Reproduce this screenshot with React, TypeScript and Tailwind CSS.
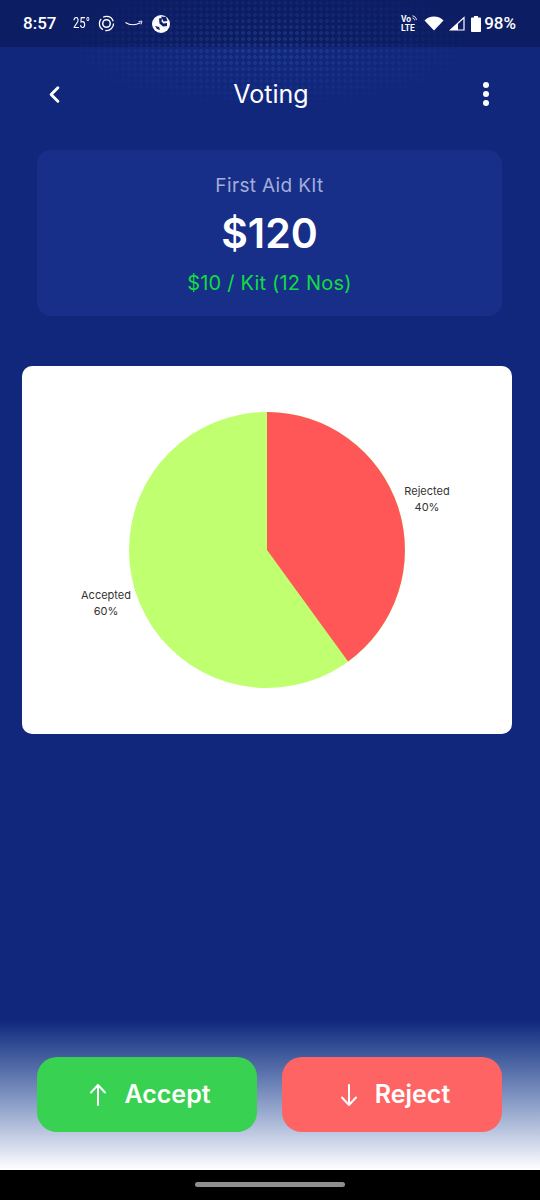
function StatusBar() {
  return (
    <div className="relative z-10 flex h-[47px] shrink-0 items-center justify-between bg-[#0c1d63] pl-[23px] pr-[24px] font-['Roboto',sans-serif] text-white">
      <div className="flex items-center">
        <span className="w-[50px] text-[17px] font-medium leading-none">8:57</span>
        <span className="w-[25px] origin-left scale-x-75 text-[15px] leading-none">25°</span>
        {/* focus ring */}
        <svg width="17" height="17" viewBox="0 0 18 18" fill="none" stroke="white">
          <circle cx="9" cy="9" r="4" strokeWidth="1.6" />
          <circle cx="9" cy="9" r="7.5" strokeWidth="1.4" strokeDasharray="13 2.7" />
        </svg>
        {/* amazon smile */}
        <svg className="ml-[10px]" width="18" height="10" viewBox="0 0 18 10" fill="none" stroke="white">
          <path d="M0.5 3.5C5 6.5 10 6.5 15.5 3.8" strokeWidth="1.1" />
          <path d="M13.5 2.5L17 2.2L16 5.4" strokeWidth="0.9" />
        </svg>
        {/* call app */}
        <svg className="ml-[9px]" width="18" height="18" viewBox="0 0 18 18">
          <circle cx="9" cy="9" r="9" fill="white" />
          <path d="M7 3.5L10 3L9.5 6.5L11.5 8.5L15 8L15 11L11 11.5L7.5 8.5Z" fill="#0c1d63" />
          <path d="M9 1.5L14 2L15.5 6L11.5 6.5Z" fill="#0c1d63" />
          <path d="M3 11L7 12L8 15L5 14Z" fill="#0c1d63" />
        </svg>
      </div>
      <div className="flex items-center">
        <div className="mr-[7px] flex flex-col text-[8.5px] font-bold leading-[9px]">
          <div className="flex items-start">
            <span>Vo</span>
            <svg className="ml-[1px]" width="5" height="8" viewBox="0 0 5 8" fill="none" stroke="white" strokeWidth="0.9">
              <path d="M0.5 0.8C2.8 1.2 4.2 2.8 4.4 5M0.5 3C1.8 3.2 2.5 4 2.7 5.4" />
            </svg>
          </div>
          <span>LTE</span>
        </div>
        <svg width="20" height="15" viewBox="0 0 20 15" fill="white">
          <path d="M0.5 4.5C3 2 6 0.5 10 0.5C14 0.5 17 2 19.5 4.5L10 14.5Z" />
        </svg>
        <svg className="ml-[5px]" width="16" height="15" viewBox="0 0 16 15" fill="none" stroke="white">
          <path d="M1.5 14L15 1.5V14Z" strokeWidth="1.2" />
          <path d="M1.5 14L9 7V14Z" fill="white" stroke="none" />
        </svg>
        <svg className="ml-[6px]" width="10" height="16" viewBox="0 0 10 16" fill="white">
          <path d="M3 0H7V1.5H9.2C9.6 1.5 10 1.9 10 2.3V15.2C10 15.6 9.6 16 9.2 16H0.8C0.4 16 0 15.6 0 15.2V2.3C0 1.9 0.4 1.5 0.8 1.5H3Z" />
        </svg>
        <span className="ml-[3px] text-[17px] font-medium leading-none">98%</span>
      </div>
    </div>
  );
}

function PieChart() {
  return (
    <svg width="490" height="368" viewBox="0 0 490 368">
      <circle cx="245" cy="184" r="138" fill="#c0ff6f" />
      <path d="M245 184V46A138 138 0 0 1 326.1 295.6Z" fill="#ff5757" />
      <g fontSize="11" fill="#333" textAnchor="middle">
        <text x="405" y="129">Rejected</text>
        <text x="405" y="145">40%</text>
        <text x="84" y="233">Accepted</text>
        <text x="84" y="249">60%</text>
      </g>
    </svg>
  );
}

function ActionArrow({ down }: { down?: boolean }) {
  return (
    <svg className={down ? 'rotate-180' : ''} width="18" height="24" viewBox="0 0 18 24" fill="none" stroke="white" strokeWidth="2" strokeLinecap="round" strokeLinejoin="round">
      <path d="M9 22V2M2 9.5L9 2L16 9.5" />
    </svg>
  );
}

export default function App() {
  return (
    <div className="relative flex h-[1200px] w-[540px] flex-col overflow-hidden bg-[#10277c] font-['Inter',sans-serif] text-white">
      {/* dot texture behind the top bars */}
      <div className="absolute left-[60px] top-0 z-20 h-[110px] w-[420px] bg-[radial-gradient(circle,rgba(90,130,230,0.22)_1.6px,transparent_2px)] bg-[length:6px_6px] [mask-image:radial-gradient(ellipse_50%_60%_at_50%_40%,black,transparent)]" />
      <StatusBar />

      {/* Header */}
      <div className="mt-[28px] grid h-[38px] shrink-0 grid-cols-[1fr_auto_1fr] items-center pl-[41px] pr-[51px]">
        <svg width="27" height="27" viewBox="0 0 24 24" fill="none" stroke="white" strokeWidth="2.6" strokeLinecap="round" strokeLinejoin="round">
          <path d="M15 18l-6-6 6-6" />
        </svg>
        <h1 className="ml-[12px] text-[25px] font-normal leading-none">Voting</h1>
        <div className="flex flex-col items-end gap-[3px]">
          <span className="h-[6px] w-[6px] rounded-full bg-white" />
          <span className="h-[6px] w-[6px] rounded-full bg-white" />
          <span className="h-[6px] w-[6px] rounded-full bg-white" />
        </div>
      </div>

      {/* Price card */}
      <div className="ml-[37px] mr-[38px] mt-[37px] flex h-[166px] shrink-0 flex-col items-center rounded-[14px] bg-[#182f8a] pt-[25px]">
        <div className="text-[19px] leading-[22px] tracking-[0.35px] text-[#a3aed8]">First Aid KIt</div>
        <div className="mt-[12px] text-[41px] font-semibold leading-[48px] text-white">$120</div>
        <div className="mt-[14px] text-[20px] leading-[24px] tracking-[0.2px] text-[#10dc42]">$10 / Kit (12 Nos)</div>
      </div>

      {/* Chart */}
      <div className="ml-[22px] mr-[28px] mt-[50px] h-[368px] shrink-0 rounded-[10px] bg-white">
        <PieChart />
      </div>

      {/* Actions */}
      <div className="mt-auto flex h-[150px] shrink-0 gap-[25px] bg-gradient-to-b from-[#10277c] to-white pl-[37px] pr-[38px] pt-[37px]">
        <button className="flex h-[75px] w-[220px] items-center justify-center gap-[17px] rounded-[20px] bg-[#38d152] pl-[6px] text-[25px] font-semibold">
          <ActionArrow />
          Accept
        </button>
        <button className="flex h-[75px] w-[220px] items-center justify-center gap-[17px] rounded-[20px] bg-[#ff6464] pl-[6px] text-[25px] font-semibold">
          <ActionArrow down />
          Reject
        </button>
      </div>

      {/* Nav bar */}
      <div className="flex h-[30px] shrink-0 justify-center bg-black pt-[12px]">
        <div className="h-[5px] w-[150px] rounded-full bg-[#8e8e8e]" />
      </div>
    </div>
  );
}
